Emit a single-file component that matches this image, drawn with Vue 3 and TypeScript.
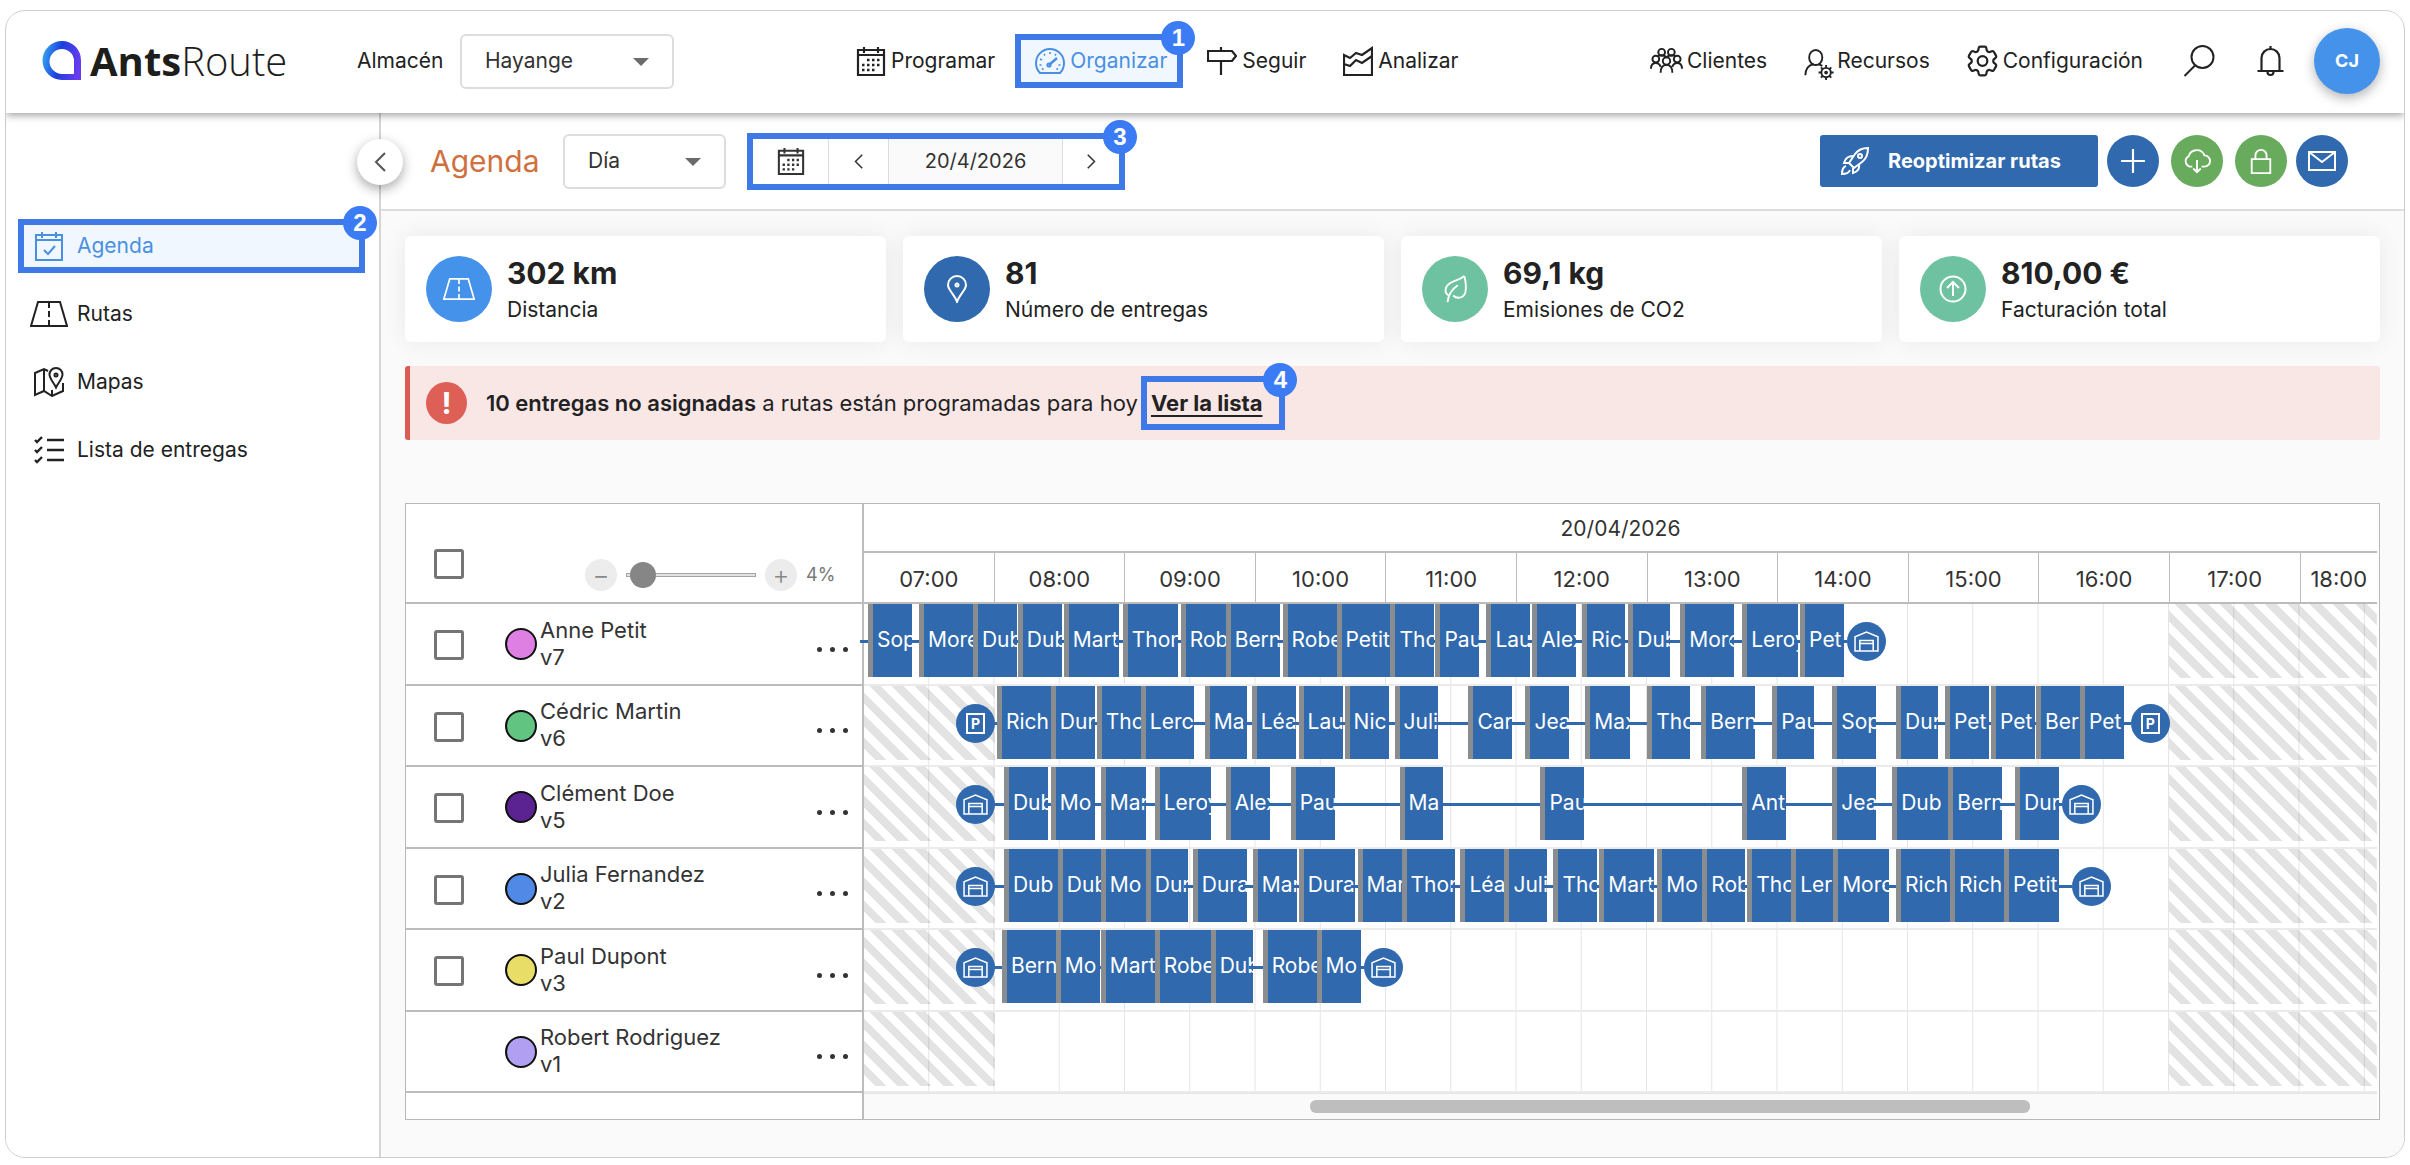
<script setup lang="ts">
import { ref } from 'vue'

type Kind = 'gap' | 'line' | 'stop' | 'depot' | 'parking'
interface Segment { kind: Kind; size: number; label?: string }
type Stop = [number, number, string]
interface Driver {
  name: string
  vehicle: string
  color: string
  selectable: boolean
  closedMorning: boolean
  segments: Segment[]
}

/* Width of the visible time span, in track units (one hour = 130.6 units). */
const SPAN = 1514
const DEPOT = 39

function build(start: number | null, stops: Stop[], end: number | null, marker: Kind = 'depot'): Segment[] {
  const out: Segment[] = []
  let at = 0
  if (start !== null) {
    out.push({ kind: 'gap', size: start }, { kind: marker, size: DEPOT })
    at = start + DEPOT
  }
  for (const [from, to, label] of stops) {
    if (from > at) out.push({ kind: 'line', size: from - at })
    out.push({ kind: 'stop', size: to - from, label })
    at = to
  }
  if (end !== null) {
    out.push({ kind: 'line', size: end - at }, { kind: marker, size: DEPOT })
  }
  return out
}

const share = (size: number) => `${(size / SPAN) * 100}%`

const drivers: Driver[] = [
  {
    name: 'Anne Petit', vehicle: 'v7', color: '#de7fe4', selectable: true, closedMorning: false,
    segments: build(null, [
      [4, 48, 'Sop'], [55, 109, 'More'], [109, 153, 'Dub'], [154, 198, 'Dub'], [200, 255, 'Mart'],
      [259, 314, 'Thom'], [317, 362, 'Rob'], [362, 416, 'Bern'], [419, 473, 'Robe'], [473, 527, 'Petit'],
      [527, 571, 'Tho'], [572, 616, 'Pau'], [623, 667, 'Lau'], [669, 713, 'Alex'], [719, 762, 'Ric'],
      [765, 807, 'Dub'], [817, 871, 'More'], [879, 935, 'Leroy'], [937, 981, 'Pet'],
    ], 984),
  },
  {
    name: 'Cédric Martin', vehicle: 'v6', color: '#62c481', selectable: true, closedMorning: true,
    segments: build(92, [
      [133, 187, 'Rich'], [187, 231, 'Dur'], [233, 277, 'Tho'], [277, 330, 'Lero'], [341, 383, 'Ma'],
      [388, 432, 'Léa'], [435, 479, 'Lau'], [481, 525, 'Nic'], [531, 575, 'Juli'], [605, 649, 'Car'],
      [662, 706, 'Jea'], [722, 767, 'Max'], [784, 827, 'Tho'], [838, 892, 'Bern'], [909, 951, 'Pau'],
      [969, 1013, 'Sop'], [1033, 1075, 'Dur'], [1082, 1126, 'Pet'], [1128, 1172, 'Pet'],
      [1173, 1217, 'Ber'], [1217, 1261, 'Pet'],
    ], 1268, 'parking'),
  },
  {
    name: 'Clément Doe', vehicle: 'v5', color: '#5a2391', selectable: true, closedMorning: true,
    segments: build(92, [
      [140, 184, 'Dub'], [187, 231, 'Mo'], [237, 282, 'Mar'], [291, 347, 'Leroy'], [362, 406, 'Alex'],
      [427, 471, 'Pau'], [536, 579, 'Ma'], [677, 721, 'Pau'], [879, 923, 'Ant'], [969, 1013, 'Jea'],
      [1029, 1085, 'Dub'], [1085, 1139, 'Bern'], [1152, 1196, 'Dur'],
    ], 1199),
  },
  {
    name: 'Julia Fernandez', vehicle: 'v2', color: '#5189e6', selectable: true, closedMorning: true,
    segments: build(92, [
      [140, 194, 'Dub'], [194, 237, 'Dub'], [237, 282, 'Mo'], [282, 324, 'Dur'], [329, 383, 'Dura'],
      [389, 433, 'Mar'], [435, 491, 'Dura'], [494, 538, 'Mar'], [538, 592, 'Thom'], [597, 641, 'Léa'],
      [641, 684, 'Juli'], [690, 734, 'Tho'], [736, 791, 'Mart'], [794, 839, 'Mo'], [839, 882, 'Rob'],
      [884, 928, 'Tho'], [928, 970, 'Ler'], [970, 1026, 'More'], [1033, 1087, 'Rich'],
      [1087, 1141, 'Rich'], [1141, 1196, 'Petit'],
    ], 1209),
  },
  {
    name: 'Paul Dupont', vehicle: 'v3', color: '#e8dd66', selectable: true, closedMorning: true,
    segments: build(92, [
      [138, 192, 'Bern'], [192, 236, 'Mo'], [237, 291, 'Mart'], [291, 347, 'Robe'], [347, 389, 'Dub'],
      [399, 453, 'Robe'], [453, 497, 'Mo'],
    ], 500),
  },
  {
    name: 'Robert Rodriguez', vehicle: 'v1', color: '#b1a0f2', selectable: false, closedMorning: true,
    segments: build(null, [], null),
  },
]

const hours = ['07:00', '08:00', '09:00', '10:00', '11:00', '12:00', '13:00', '14:00', '15:00', '16:00', '17:00', '18:00']
const hourSize = (i: number) => (i === hours.length - 1 ? 770 : 1306)

const stats = [
  { icon: 'road', tone: 'sky', value: '302 km', label: 'Distancia' },
  { icon: 'pin', tone: 'navy', value: '81', label: 'Número de entregas' },
  { icon: 'leaf', tone: 'mint', value: '69,1 kg', label: 'Emisiones de CO2' },
  { icon: 'up', tone: 'mint', value: '810,00 €', label: 'Facturación total' },
]

const zoom = ref(4)
</script>

<template>
  <div class="page">
    <svg class="sprite" aria-hidden="true">
      <symbol id="i-calendar" viewBox="0 0 30 30">
        <path d="M2 4h26v25H2zM2 9h26M8 1v6M22 1v6" stroke-width="2.200" />
        <path stroke-dasharray="2.500 2.500" d="M11 14h14M6 19h19M6 24h14" stroke-width="2.600" />
      </symbol>
      <symbol id="i-gauge" viewBox="0 0 30 30">
        <path d="M5 27C2 24 1 21 1 17a14 14 0 0 1 28 0c0 4-1 7-4 10z" />
        <path d="M14 19 22 12" stroke-width="2.400" />
        <circle cx="14" cy="19" r="1.600" />
        <path d="M15 6v2M9 8l1 1.500M21 8l-1 1.500M5 13l2 1M4.500 19h2M25.500 19h-2M7 23.500l1.500-1M23 23.500l-1.500-1" stroke-width="1.600" />
      </symbol>
      <symbol id="i-sign" viewBox="0 0 30 30">
        <path d="M1 5h24l4 5-4 5H1zM14 1v4M14 15v14" stroke-width="2.200" />
      </symbol>
      <symbol id="i-chart" viewBox="0 0 30 30">
        <path d="M1 9l6 3 6-5 6 2L29 2v27H1zM1 18l6 2 6-6 6 3 10-7" stroke-width="2.200" />
      </symbol>
      <symbol id="i-people" viewBox="0 0 34 28">
        <circle cx="12" cy="5" r="3.500" /><circle cx="22" cy="5" r="3.500" />
        <circle cx="6" cy="12" r="3.500" /><circle cx="28" cy="12" r="3.500" /><circle cx="17" cy="14" r="3.800" />
        <path d="M1 22c0-4 2-6 5-6s4 1 5 4M33 22c0-4-2-6-5-6s-4 1-5 4M11 26c0-5 2-8 6-8s6 3 6 8M8 9c1-1 6-2 9 1 3-3 8-2 9-1" />
      </symbol>
      <symbol id="i-person-gear" viewBox="0 0 32 34">
        <ellipse cx="12" cy="9" rx="7" ry="8" /><path d="M1 28c0-7 3-11 9-12M15 16l4 2" />
        <circle cx="23" cy="25" r="5" /><circle cx="23" cy="25" r="1" />
        <path d="M23 17v3M23 30v3M15 25h3M28 25h3M17.500 19.500l2 2M26.500 28.500l2 2M28.500 19.500l-2 2M19.500 28.500l-2 2" />
      </symbol>
      <symbol id="i-gear" viewBox="2 2 20 20">
        <path stroke-width="1.400" d="M9.594 3.940c.09-.542.56-.94 1.110-.94h2.593c.55 0 1.020.398 1.110.94l.213 1.281c.063.374.313.686.645.87.074.04.147.083.22.127.325.196.72.257 1.075.124l1.217-.456a1.125 1.125 0 0 1 1.370.49l1.296 2.247a1.125 1.125 0 0 1-.26 1.431l-1.003.827c-.293.241-.438.613-.43.992a7.723 7.723 0 0 1 0 .255c-.008.378.137.75.43.991l1.004.827c.424.35.534.955.26 1.430l-1.298 2.247a1.125 1.125 0 0 1-1.369.491l-1.217-.456c-.355-.133-.75-.072-1.076.124a6.470 6.470 0 0 1-.22.128c-.331.183-.581.495-.644.869l-.213 1.281c-.09.543-.56.94-1.110.94h-2.594c-.55 0-1.019-.398-1.110-.94l-.213-1.281c-.062-.374-.312-.686-.644-.87a6.520 6.520 0 0 1-.22-.127c-.325-.196-.72-.257-1.076-.124l-1.217.456a1.125 1.125 0 0 1-1.369-.49l-1.297-2.247a1.125 1.125 0 0 1 .26-1.431l1.004-.827c.292-.24.437-.613.43-.991a6.932 6.932 0 0 1 0-.255c.007-.38-.138-.751-.43-.992l-1.004-.827a1.125 1.125 0 0 1-.26-1.430l1.297-2.247a1.125 1.125 0 0 1 1.370-.491l1.216.456c.356.133.751.072 1.076-.124.072-.044.146-.086.22-.128.332-.183.582-.495.644-.869l.214-1.280Z" />
        <circle cx="12" cy="12" r="3" stroke-width="1.400" />
      </symbol>
      <symbol id="i-search" viewBox="0 0 32 32"><circle cx="19" cy="12" r="11" /><path d="M12 20 1 31" /></symbol>
      <symbol id="i-bell" viewBox="0 0 28 32"><path d="M1 26h26M5 26V13a9 9 0 0 1 18 0v13M14 1v3M11 27a3 3 0 0 0 6 0" stroke-width="2.200" /></symbol>
      <symbol id="i-agenda" viewBox="0 0 30 30"><path d="M2 4h26v25H2zM2 9h26M8 1v6M22 1v6M10 19l4 4 7-8" /></symbol>
      <symbol id="i-road" viewBox="0 0 38 26"><path d="M8 1h22l7 24H1zM19 2v5M19 10v6M19 19v5" /></symbol>
      <symbol id="i-map" viewBox="0 0 30 30">
        <path d="M14 4 10 2 1 6v22l9-4 8 5 11-5v-8M10 2v22M18 23v6M22 1c-4 0-6.500 3-6.500 6.500 0 4 4 8 6.500 13 2.500-5 6.500-9 6.500-13C28.500 4 26 1 22 1z" /><circle cx="22" cy="8" r="1.500" />
      </symbol>
      <symbol id="i-list" viewBox="0 0 30 28"><path d="M13 4h17M13 14h17M13 24h17M1 4l2 2 5-5M1 14l2 2 5-5M1 24l2 2 5-5" stroke-width="2.400" /></symbol>
      <symbol id="i-left" viewBox="0 0 12 20"><path d="M11 1 2 10l9 9" /></symbol>
      <symbol id="i-right" viewBox="0 0 12 20"><path d="M1 1l9 9-9 9" /></symbol>
      <symbol id="i-rocket" viewBox="0 0 28 28">
        <path d="M27 1c-6 0-10 2-13 6L8 16l5 5 8-6c4-3 6-7 6-14zM12 9c-5 0-8 3-9 7l5 0M18 17c1 5-2 8-6 9l0-5M5 19c-3 1-4 4-4 8 4 0 7-1 8-4" /><circle cx="19" cy="9" r="2" />
      </symbol>
      <symbol id="i-plus" viewBox="0 0 24 24"><path d="M12 1v22M1 12h22" /></symbol>
      <symbol id="i-cloud" viewBox="0 0 30 26"><path d="M10 19H7a6 6 0 0 1-1-11 9 9 0 0 1 17-1 6 6 0 0 1 0 12h-3M15 12v12M11 21l4 4 4-4" /></symbol>
      <symbol id="i-lock" viewBox="0 0 24 28"><path d="M2 12h20v15H2zM6 12V8a6 6 0 0 1 12 0v4" /></symbol>
      <symbol id="i-mail" viewBox="0 0 28 20"><path d="M1 1h26v18H1zM1 1l13 10L27 1" /></symbol>
      <symbol id="i-pin" viewBox="0 0 20 28"><path d="M10 27C8 20 1 15 1 10a9 9 0 0 1 18 0c0 5-7 10-9 17z" /><circle cx="10" cy="10" r="1.500" /></symbol>
      <symbol id="i-leaf" viewBox="0 0 26 30"><path d="M23 1c-4 4-8 4-12 6C1 11 1 20 7 22M23 1c2 8 2 14 1 18-2 6-9 7-13 3M16 11C10 15 6 20 5 29" /></symbol>
      <symbol id="i-up" viewBox="0 0 28 28"><circle cx="14" cy="14" r="12.500" /><path d="M14 21V8M8 13l6-6 6 6" /></symbol>
      <symbol id="i-depot" viewBox="0 0 26 22"><path d="M1 21V6l12-5 12 5v15H1zM6 21V10h14v11M6 13h14" stroke-width="1.600" /></symbol>
    </svg>

    <div class="frame">
      <header class="topbar">
        <a class="logo" href="#">
          <svg class="mark" viewBox="0 0 40 40" aria-hidden="true">
            <defs>
              <linearGradient id="markFill" x1="0" y1="0.300" x2="1" y2="0.500">
                <stop offset="0" stop-color="#35a5f5" /><stop offset="0.450" stop-color="#1b3fdc" /><stop offset="1" stop-color="#6a3cf0" />
              </linearGradient>
            </defs>
            <path fill="url(#markFill)" fill-rule="evenodd" d="M20 0a19 19 0 0 1 19 19v20H20A19 19 0 0 1 20 0zm0 8a12 12 0 0 0 0 25h12V20A12 12 0 0 0 20 8z" />
          </svg>
          <span class="word"><b>Ants</b>Route</span>
        </a>
        <label class="depot-label" for="depot">Almacén</label>
        <span class="pick pick-depot"><select id="depot"><option>Hayange</option></select></span>

        <nav class="mainnav">
          <a href="#"><svg class="ico"><use href="#i-calendar" /></svg>Programar</a>
          <a href="#" class="active callout"><svg class="ico"><use href="#i-gauge" /></svg>Organizar<span class="badge">1</span></a>
          <a href="#"><svg class="ico"><use href="#i-sign" /></svg>Seguir</a>
          <a href="#"><svg class="ico"><use href="#i-chart" /></svg>Analizar</a>
        </nav>

        <nav class="usernav">
          <a href="#"><svg class="ico wide"><use href="#i-people" /></svg>Clientes</a>
          <a href="#"><svg class="ico wide low"><use href="#i-person-gear" /></svg>Recursos</a>
          <a href="#"><svg class="ico wide"><use href="#i-gear" /></svg>Configuración</a>
          <button type="button" aria-label="Buscar"><svg class="ico wide"><use href="#i-search" /></svg></button>
          <button type="button" aria-label="Notificaciones"><svg class="ico wide"><use href="#i-bell" /></svg></button>
          <button type="button" class="avatar">CJ</button>
        </nav>
      </header>

      <div class="body">
        <aside class="sidebar">
          <button type="button" class="collapse" aria-label="Contraer"><svg><use href="#i-left" /></svg></button>
          <a href="#" class="active callout"><svg class="ico"><use href="#i-agenda" /></svg>Agenda<span class="badge">2</span></a>
          <a href="#"><svg class="ico road"><use href="#i-road" /></svg>Rutas</a>
          <a href="#"><svg class="ico"><use href="#i-map" /></svg>Mapas</a>
          <a href="#"><svg class="ico"><use href="#i-list" /></svg>Lista de entregas</a>
        </aside>

        <main>
          <div class="toolbar">
            <h1>Agenda</h1>
            <span class="pick pick-view"><select aria-label="Vista"><option>Día</option></select></span>
            <div class="dates callout">
              <button type="button" class="cal" aria-label="Calendario"><svg><use href="#i-calendar" /></svg></button>
              <button type="button" class="step" aria-label="Anterior"><svg><use href="#i-left" /></svg></button>
              <span class="date">20/4/2026</span>
              <button type="button" class="step" aria-label="Siguiente"><svg><use href="#i-right" /></svg></button>
              <span class="badge">3</span>
            </div>
            <div class="actions">
              <button type="button" class="primary"><svg><use href="#i-rocket" /></svg>Reoptimizar rutas</button>
              <button type="button" class="round navy" aria-label="Añadir"><svg><use href="#i-plus" /></svg></button>
              <button type="button" class="round green" aria-label="Descargar"><svg><use href="#i-cloud" /></svg></button>
              <button type="button" class="round green" aria-label="Bloquear"><svg><use href="#i-lock" /></svg></button>
              <button type="button" class="round navy mail" aria-label="Enviar"><svg><use href="#i-mail" /></svg></button>
            </div>
          </div>

          <div class="content">
            <section class="cards">
              <article v-for="s in stats" :key="s.label" class="card">
                <span class="disc" :class="s.tone"><svg><use :href="'#i-' + s.icon" /></svg></span>
                <div><strong>{{ s.value }}</strong><p>{{ s.label }}</p></div>
              </article>
            </section>

            <div class="alert">
              <span class="bang">!</span>
              <p>
                <b>10 entregas no asignadas</b> a rutas están programadas para hoy
                <a href="#">Ver la lista<span class="ring callout"><span class="badge">4</span></span></a>
              </p>
            </div>

            <div class="planner">
              <table>
                <colgroup><col class="c-driver" /><col /></colgroup>
                <thead>
                  <tr class="r-date">
                    <th rowspan="2" class="tools">
                      <div>
                        <input type="checkbox" class="check" aria-label="Seleccionar todo" />
                        <div class="zoom">
                          <button type="button" aria-label="Reducir">−</button>
                          <input v-model.number="zoom" type="range" min="0" max="100" aria-label="Zoom" />
                          <button type="button" aria-label="Ampliar">+</button>
                          <span>{{ zoom }}%</span>
                        </div>
                      </div>
                    </th>
                    <th class="day">20/04/2026</th>
                  </tr>
                  <tr class="r-hours">
                    <th class="hours">
                      <div><span v-for="(h, i) in hours" :key="h" :style="{ flexGrow: hourSize(i) }">{{ h }}</span></div>
                    </th>
                  </tr>
                </thead>
                <tbody>
                  <tr v-for="d in drivers" :key="d.name">
                    <td class="driver">
                      <div>
                        <input v-if="d.selectable" type="checkbox" class="check" :aria-label="d.name" />
                        <span v-else class="check-space"></span>
                        <span class="dot" :style="{ background: d.color }"></span>
                        <span class="who">{{ d.name }}<br />{{ d.vehicle }}</span>
                        <button type="button" class="more" aria-label="Más"><i></i><i></i><i></i></button>
                      </div>
                    </td>
                    <td class="lane">
                      <div class="track" :class="{ closed: d.closedMorning }">
                        <span
                          v-for="(s, i) in d.segments" :key="i"
                          class="seg" :class="s.kind" :style="{ width: share(s.size) }"
                        ><svg v-if="s.kind === 'depot'"><use href="#i-depot" /></svg><span v-else-if="s.kind === 'parking'" class="sign">P</span>{{ s.label }}</span>
                      </div>
                    </td>
                  </tr>
                </tbody>
                <tfoot>
                  <tr>
                    <td class="blank"></td>
                    <td class="scroll"><div><i class="before"></i><i class="thumb"></i><i class="after"></i></div></td>
                  </tr>
                </tfoot>
              </table>
            </div>
          </div>
        </main>
      </div>
    </div>
  </div>
</template>

<style>
body {
  margin: 0;
  background: #fff;
}
</style>

<style scoped>
* {
  box-sizing: border-box;
}
.page {
  min-height: 100vh;
  padding: 10px 5px 8px 5px;
  display: flex;
  font: 400 21px/26px Inter, "Open Sans", sans-serif;
  color: #222;
}
.sprite {
  position: absolute;
  width: 0;
  height: 0;
}
svg {
  fill: none;
  stroke: currentColor;
  stroke-width: 2;
  flex: none;
}
button {
  font: inherit;
  color: inherit;
  background: none;
  border: 0;
  padding: 0;
  display: flex;
  align-items: center;
  justify-content: center;
  cursor: pointer;
}
a {
  color: inherit;
  text-decoration: none;
}
.frame {
  flex: 1;
  min-width: 0;
  display: flex;
  flex-direction: column;
  border: 1px solid #ccc;
  border-radius: 20px;
  overflow: hidden;
}

/* numbered highlights */
.callout {
  position: relative;
  border: 6px solid #3f79e8;
}
.badge {
  position: absolute;
  top: -19px;
  right: -18px;
  width: 34px;
  height: 34px;
  border-radius: 50%;
  background: #3b7bf3;
  color: #fff;
  font: 700 24px/34px "Liberation Sans", sans-serif;
  text-align: center;
}

/* top bar */
.topbar {
  height: 102px;
  display: flex;
  align-items: center;
  padding: 0 24px 2px 36px;
  background: #fff;
  box-shadow: 0 2px 8px rgba(0, 0, 0, 0.4);
  position: relative;
  z-index: 2;
}
.logo {
  display: flex;
  align-items: center;
  gap: 8px;
  width: 315px;
}
.mark {
  width: 40px;
  height: 40px;
  stroke: none;
}
.word {
  font: 300 40px/48px "Open Sans", sans-serif;
  color: #1d1d1b;
}
.word b {
  font-weight: 700;
}
.depot-label {
  width: 103px;
}
.pick {
  position: relative;
  display: block;
  height: 55px;
}
.pick::after {
  content: "";
  position: absolute;
  right: 25px;
  top: 24px;
  border: 8px solid transparent;
  border-top-color: #6b6b6b;
  border-bottom: 0;
  pointer-events: none;
}
.pick select {
  appearance: none;
  width: 100%;
  height: 100%;
  padding: 0 23px;
  font: inherit;
  color: #333;
  background: #fff;
  border: 2px solid #ddd;
  border-radius: 6px;
}
.pick-depot {
  width: 214px;
}
.mainnav,
.usernav {
  display: flex;
  align-items: center;
}
.mainnav {
  margin-left: 182px;
}
.mainnav a,
.usernav a {
  display: flex;
  align-items: center;
  gap: 5px;
  white-space: nowrap;
}
.mainnav a {
  margin-right: 37px;
}
.mainnav .callout {
  height: 54px;
  padding: 0 10px 0 14px;
  margin: 0 24px 0 -17px;
}
.active {
  color: #4a90e2;
  background: #f1f7fe;
}
.ico {
  width: 30px;
  height: 30px;
}
.ico.wide {
  width: 33px;
  height: 32px;
}
.ico.low {
  margin-top: 8px;
}
.usernav {
  margin-left: auto;
}
.usernav a {
  gap: 4px;
  margin-right: 36px;
}
.usernav a .low {
  margin-right: -3px;
}
.usernav a + button {
  margin-left: 4px;
}
.usernav button {
  margin-right: 38px;
}
.usernav .avatar {
  width: 66px;
  height: 66px;
  margin: 0 0 0 -11px;
  border-radius: 50%;
  background: #4592eb;
  color: #fff;
  font-weight: 700;
  font-size: 18px;
  box-shadow: 0 4px 12px rgba(0, 0, 0, 0.3);
}

/* side bar */
.body {
  flex: 1;
  display: flex;
}
.sidebar {
  width: 375px;
  padding: 106px 14px 0 12px;
  border-right: 2px solid #d4d4d4;
  background: #fff;
  position: relative;
  flex: none;
}
.sidebar a {
  display: flex;
  align-items: center;
  gap: 13px;
  height: 54px;
  margin-bottom: 14px;
  padding-left: 16px;
}
.sidebar a.callout {
  padding-left: 10px;
}
.sidebar .road {
  width: 38px;
  height: 26px;
  margin: 0 -4px;
}
.collapse {
  position: absolute;
  right: -24px;
  top: 26px;
  width: 46px;
  height: 46px;
  border-radius: 50%;
  background: #fff;
  color: #555;
  box-shadow: 0 4px 12px rgba(0, 0, 0, 0.35);
  z-index: 1;
}
.collapse svg {
  width: 12px;
  height: 20px;
}

/* main column */
main {
  flex: 1;
  min-width: 0;
  background: #fafafa;
}
.toolbar {
  height: 98px;
  display: flex;
  align-items: center;
  padding: 0 56px 0 49px;
  background: #fff;
  border-bottom: 2px solid #dedede;
}
h1 {
  width: 133px;
  margin: 0;
  font-size: 30px;
  line-height: 36px;
  font-weight: 400;
  color: #d0703f;
}
.pick-view {
  width: 163px;
}
.dates {
  display: flex;
  height: 57px;
  width: 378px;
  margin-left: 21px;
  color: #333;
  font-size: 20px;
}
.dates button,
.date {
  border-right: 1px solid #ddd;
}
.dates .cal {
  width: 76px;
}
.cal svg {
  width: 28px;
  height: 28px;
}
.dates .step {
  width: 60px;
}
.dates .step:last-of-type {
  width: 56px;
  border: 0;
}
.step svg {
  width: 9px;
  height: 15px;
}
.date {
  flex: 1;
  background: #fafafa;
  text-align: center;
  line-height: 45px;
}
.actions {
  margin-left: auto;
  display: flex;
  align-items: center;
}
.primary {
  height: 52px;
  width: 278px;
  padding-left: 21px;
  justify-content: flex-start;
  gap: 19px;
  background: #3069ad;
  color: #fff;
  font-size: 20px;
  font-weight: 700;
  border-radius: 3px;
}
.primary svg {
  width: 28px;
  height: 28px;
}
.round {
  width: 52px;
  height: 52px;
  border-radius: 50%;
  margin-left: 12px;
  color: #fff;
}
.primary + .round,
.mail {
  margin-left: 9px;
}
.round svg {
  width: 28px;
  height: 26px;
}
.navy {
  background: #3069ad;
}
.green {
  background: #68ab5c;
}
.content {
  padding: 25px 24px 37px 24px;
}
.cards {
  display: flex;
  gap: 17px;
}
.card {
  flex: 1;
  height: 106px;
  display: flex;
  align-items: center;
  gap: 15px;
  padding-left: 21px;
  background: #fff;
  border-radius: 6px;
  box-shadow: 0 0 24px rgba(0, 0, 20, 0.07);
}
.disc {
  width: 66px;
  height: 66px;
  border-radius: 50%;
  display: flex;
  align-items: center;
  justify-content: center;
  color: #fff;
}
.disc svg {
  width: 32px;
  height: 28px;
}
.sky {
  background: #4592eb;
}
.mint {
  background: #6fc2a1;
}
.card strong {
  display: block;
  font-size: 30px;
  line-height: 36px;
}
.card p {
  margin: 6px 0 0;
  line-height: 26px;
}
.alert {
  display: flex;
  align-items: center;
  gap: 19px;
  height: 74px;
  margin-top: 24px;
  padding-left: 16px;
  border-left: 5px solid #dc5b55;
  border-radius: 3px;
  background: #f9e7e6;
  font-size: 22px;
}
.alert p {
  margin: 0;
  white-space: nowrap;
}
.alert b {
  font-weight: 600;
}
.alert a {
  position: relative;
  margin-left: 7px;
  font-weight: 700;
  text-decoration: underline;
  text-underline-offset: 4px;
}
.ring {
  position: absolute;
  inset: -14px -23px -14px -10px;
}
.bang {
  width: 41px;
  height: 42px;
  border-radius: 50%;
  background: #de5f56;
  color: #fff;
  font: 700 30px/42px Inter, sans-serif;
  text-align: center;
}

/* planner */
.planner {
  margin-top: 63px;
  padding-right: 2px;
  border: 1px solid #b8b8b8;
  background: #fff;
}
table {
  width: 100%;
  table-layout: fixed;
  border-collapse: separate;
  border-spacing: 0;
  color: #333;
  font-size: 22px;
}
th,
td {
  padding: 0;
  font-weight: 400;
  border: 0 solid #bcbcbc;
}
.c-driver {
  width: 458px;
}
.r-date {
  height: 49px;
}
.r-hours {
  height: 51px;
}
.day,
.hours {
  border-bottom-width: 2px;
}
.day {
  font-size: 21px;
  padding-top: 3px;
}
.tools,
.driver,
.blank {
  border-right-width: 2px;
  border-bottom-width: 2px;
}
.blank {
  border-bottom-width: 0;
}
.tools > div {
  display: flex;
  align-items: center;
  padding: 22px 28px 0;
}
.check {
  appearance: none;
  width: 30px;
  height: 30px;
  margin: 0;
  border: 3px solid #757575;
  border-radius: 3px;
  background: #fff;
  flex: none;
}
.check-space {
  width: 30px;
}
.zoom {
  display: flex;
  align-items: center;
  gap: 9px;
  margin: 22px 0 0 121px;
  color: #777;
}
.zoom button {
  width: 32px;
  height: 32px;
  border-radius: 50%;
  background: #ececec;
  color: #888;
  font-size: 26px;
  font-weight: 300;
  line-height: 32px;
}
.zoom input {
  appearance: none;
  width: 130px;
  height: 26px;
  margin: 0;
  background:
    linear-gradient(#e2e2e2, #e2e2e2) center / calc(100% - 2px) 2px no-repeat,
    linear-gradient(#a4a4a4, #a4a4a4) center / 100% 4px no-repeat;
}
.zoom input::-webkit-slider-thumb {
  appearance: none;
  width: 26px;
  height: 26px;
  border-radius: 50%;
  background: #868686;
}
.zoom span {
  font-size: 18px;
}
.hours div {
  display: flex;
  height: 49px;
}
.hours span {
  flex: 1 1 0;
  min-width: 0;
  line-height: 52px;
  border-right: 1px solid #bcbcbc;
}
.hours span:last-child {
  border: 0;
}
tbody tr {
  height: 82px;
}
tbody tr:nth-child(even) {
  height: 81px;
}
.driver > div {
  display: flex;
  align-items: center;
  padding: 2px 14px 0 28px;
}
.dot {
  width: 32px;
  height: 32px;
  margin: 0 3px 2px 41px;
  border: 2px solid #111;
  border-radius: 50%;
  flex: none;
}
.who {
  line-height: 27px;
  padding-bottom: 3px;
  white-space: nowrap;
}
.more {
  gap: 8px;
  margin: 8px 0 0 auto;
}
.more i {
  width: 5px;
  height: 5px;
  border-radius: 50%;
  background: #333;
}
.lane {
  vertical-align: top;
  border-bottom: 2px solid #ebebeb;
  background: linear-gradient(90deg, transparent calc(100% - 1px), #e4e4e4 0) 0 0 / calc(6530% / 1514) 100%;
}
.track {
  --stripes: repeating-linear-gradient(45deg, transparent 0 8px, rgba(0, 0, 0, 0.11) 8px 16px);
  display: flex;
  height: 74px;
  background: var(--stripes) right / calc(20800% / 1514) 100% no-repeat;
}
.track.closed {
  background:
    var(--stripes) left / calc(13100% / 1514) 100% no-repeat,
    var(--stripes) right / calc(20800% / 1514) 100% no-repeat;
}
.seg {
  flex: none;
}
.line::before {
  content: "";
  display: block;
  position: relative;
  height: 3px;
  margin: 36px 0 0 -4px;
  background: #3069ad;
}
.stop {
  height: 73px;
  padding-left: 4px;
  border-left: 5px solid #8a8d90;
  background: #3069ad;
  color: #fff;
  font-size: 21px;
  line-height: 72px;
  white-space: nowrap;
  overflow: hidden;
}
.depot,
.parking {
  height: 39px;
  margin-top: 18px;
  border-radius: 50%;
  background: #3069ad;
  color: #fff;
  display: flex;
  align-items: center;
  justify-content: center;
  position: relative;
}
.depot svg {
  width: 25px;
  height: 21px;
}
.sign {
  width: 19px;
  height: 21px;
  border: 2px solid #fff;
  font-size: 14px;
  font-weight: 700;
  line-height: 17px;
  text-align: center;
}
.scroll {
  background: #fafafa;
  border-top: 1px solid #e4e4e4;
}
.scroll div {
  display: flex;
  height: 25px;
  align-items: center;
}
.before {
  flex: 446 1 0;
}
.thumb {
  flex: 721 1 0;
  height: 13px;
  border-radius: 6px;
  background: #bebebe;
}
.after {
  flex: 347 1 0;
}
</style>
